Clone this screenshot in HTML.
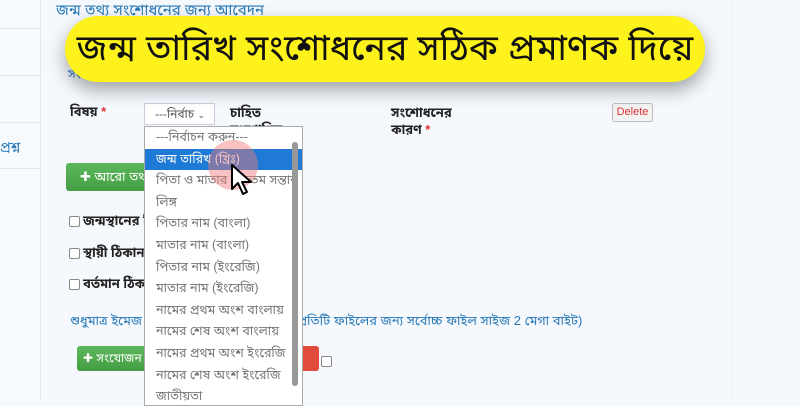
<!DOCTYPE html>
<html><head><meta charset="utf-8"><style>
*{margin:0;padding:0;box-sizing:border-box}
body{width:800px;height:400px;overflow:hidden;background:#f5f9fd;font-family:"Liberation Sans","Noto Sans Bengali","Lohit Bengali",sans-serif;position:relative;color:#222}
.side{position:absolute;left:0;top:0;width:41px;height:400px;background:#f7fafd;border-right:1px solid #e3e9ef}
.side div{position:absolute;left:0;width:40px;border-top:1px solid #e1e7ee}
.right{position:absolute;left:732px;top:0;width:68px;height:400px;background:#f6f9fc;border-left:1px solid #edf1f5}
.a{position:absolute;white-space:nowrap}
.banner{position:absolute;left:65px;top:16px;width:640px;height:66px;background:#fdf21b;border-radius:33px;box-shadow:0 8px 18px rgba(0,0,0,.35);font-size:36px;line-height:64px;text-align:center;color:#111;font-weight:normal;white-space:nowrap;overflow:hidden}
.blue{color:#2a7ab8}
.btn{position:absolute;border-radius:3px;color:#fff;font-size:13px;white-space:nowrap}
.dd{position:absolute;left:144px;top:126px;width:159px;height:280px;background:#fff;border:1px solid #aaa;overflow:hidden}
.dd div{height:21.6px;line-height:21px;padding-left:11px;font-size:12.5px;color:#777;white-space:nowrap}
.cb{display:inline-block;width:11px;height:11px;border:1px solid #888;border-radius:2px;background:#fff;vertical-align:middle;margin-right:3px}
</style></head><body>
<div class="side"><div style="top:28px"></div><div style="top:75px"></div><div style="top:122px"></div><div style="top:168px"></div></div>
<div class="a" style="left:0;top:139px;font-size:14px;color:#2a7ab8">প্রশ্ন</div>
<div class="right"></div>
<div class="a blue" style="left:56px;top:2px;font-size:15px">জন্ম তথ্য সংশোধনের জন্য আবেদন</div>
<div class="a blue" style="left:68px;top:67px;font-size:12px">সংশোধিত তথ্য নির্বাচন</div>
<div class="a" style="left:70px;top:104px;font-size:13px;font-weight:bold">বিষয় <span style="color:#d33">*</span></div>
<div class="a" style="left:144px;top:103px;width:71px;height:22px;background:#fff;border:1px solid #ccd;font-size:12px;line-height:20px;padding-left:10px;color:#555">---নির্বাচ <span style="font-size:9px">⌄</span></div>
<div class="a" style="left:230px;top:104px;font-size:13px;font-weight:bold;line-height:17px">চাহিত<br>সংশোধিত</div>
<div class="a" style="left:391px;top:104px;font-size:13px;font-weight:bold;line-height:17px">সংশোধনের<br>কারণ <span style="color:#d33">*</span></div>
<div class="a" style="left:612px;top:103px;width:41px;height:19px;border:1px solid #bbb;border-radius:3px;background:#f3f3f3;color:#d33;font-size:11px;text-align:center;line-height:17px">Delete</div>
<div class="btn" style="left:66px;top:163px;width:90px;height:28px;background:linear-gradient(#5cb85c,#449d44);line-height:28px;padding-left:14px">✚ আরো তথ্য</div>
<div class="a" style="left:69px;top:213px;font-size:13px;font-weight:bold"><span class="cb"></span>জন্মস্থানের ঠিকানা</div>
<div class="a" style="left:69px;top:245px;font-size:13px;font-weight:bold"><span class="cb"></span>স্থায়ী ঠিকানা</div>
<div class="a" style="left:69px;top:276px;font-size:13px;font-weight:bold"><span class="cb"></span>বর্তমান ঠিকানা</div>
<div class="a blue" style="left:70px;top:313px;font-size:13px">শুধুমাত্র ইমেজ ফাইল আপলোড করা যাবে। (প্রতিটি ফাইলের জন্য সর্বোচ্চ ফাইল সাইজ 2 মেগা বাইট)</div>
<div class="btn" style="left:77px;top:346px;width:70px;height:25px;background:linear-gradient(#5cb85c,#449d44);line-height:25px;padding-left:6px;font-size:12px">✚ সংযোজন</div>
<div class="btn" style="left:290px;top:346px;width:29px;height:25px;background:#e04b3a;line-height:25px;padding-left:4px">ট</div>
<div class="a" style="left:321px;top:353px"><span class="cb"></span></div>
<div class="dd">
<div>---নির্বাচন করুন---</div>
<div style="background:#1e7ad6;color:#fff">জন্ম তারিখ (খ্রিঃ)</div>
<div>পিতা ও মাতার কততম সন্তান</div>
<div>লিঙ্গ</div>
<div>পিতার নাম (বাংলা)</div>
<div>মাতার নাম (বাংলা)</div>
<div>পিতার নাম (ইংরেজি)</div>
<div>মাতার নাম (ইংরেজি)</div>
<div>নামের প্রথম অংশ বাংলায়</div>
<div>নামের শেষ অংশ বাংলায়</div>
<div>নামের প্রথম অংশ ইংরেজি</div>
<div>নামের শেষ অংশ ইংরেজি</div>
<div>জাতীয়তা</div>
</div>
<div class="a" style="left:292px;top:142px;width:6px;height:244px;background:#999;border-radius:3px"></div>
<div class="a" style="left:208px;top:140px;width:50px;height:50px;border-radius:50%;background:rgba(240,120,120,.45)"></div>
<svg class="a" style="left:230px;top:163px" width="26" height="36" viewBox="0 0 26 36"><path d="M2 2 L2 26 L8 20 L13 31 L17 29 L12 19 L21 19 Z" fill="#fff" stroke="#000" stroke-width="2" stroke-linejoin="round"/></svg>
<div class="banner">জন্ম তারিখ সংশোধনের সঠিক প্রমাণক দিয়ে</div>
</body></html>
